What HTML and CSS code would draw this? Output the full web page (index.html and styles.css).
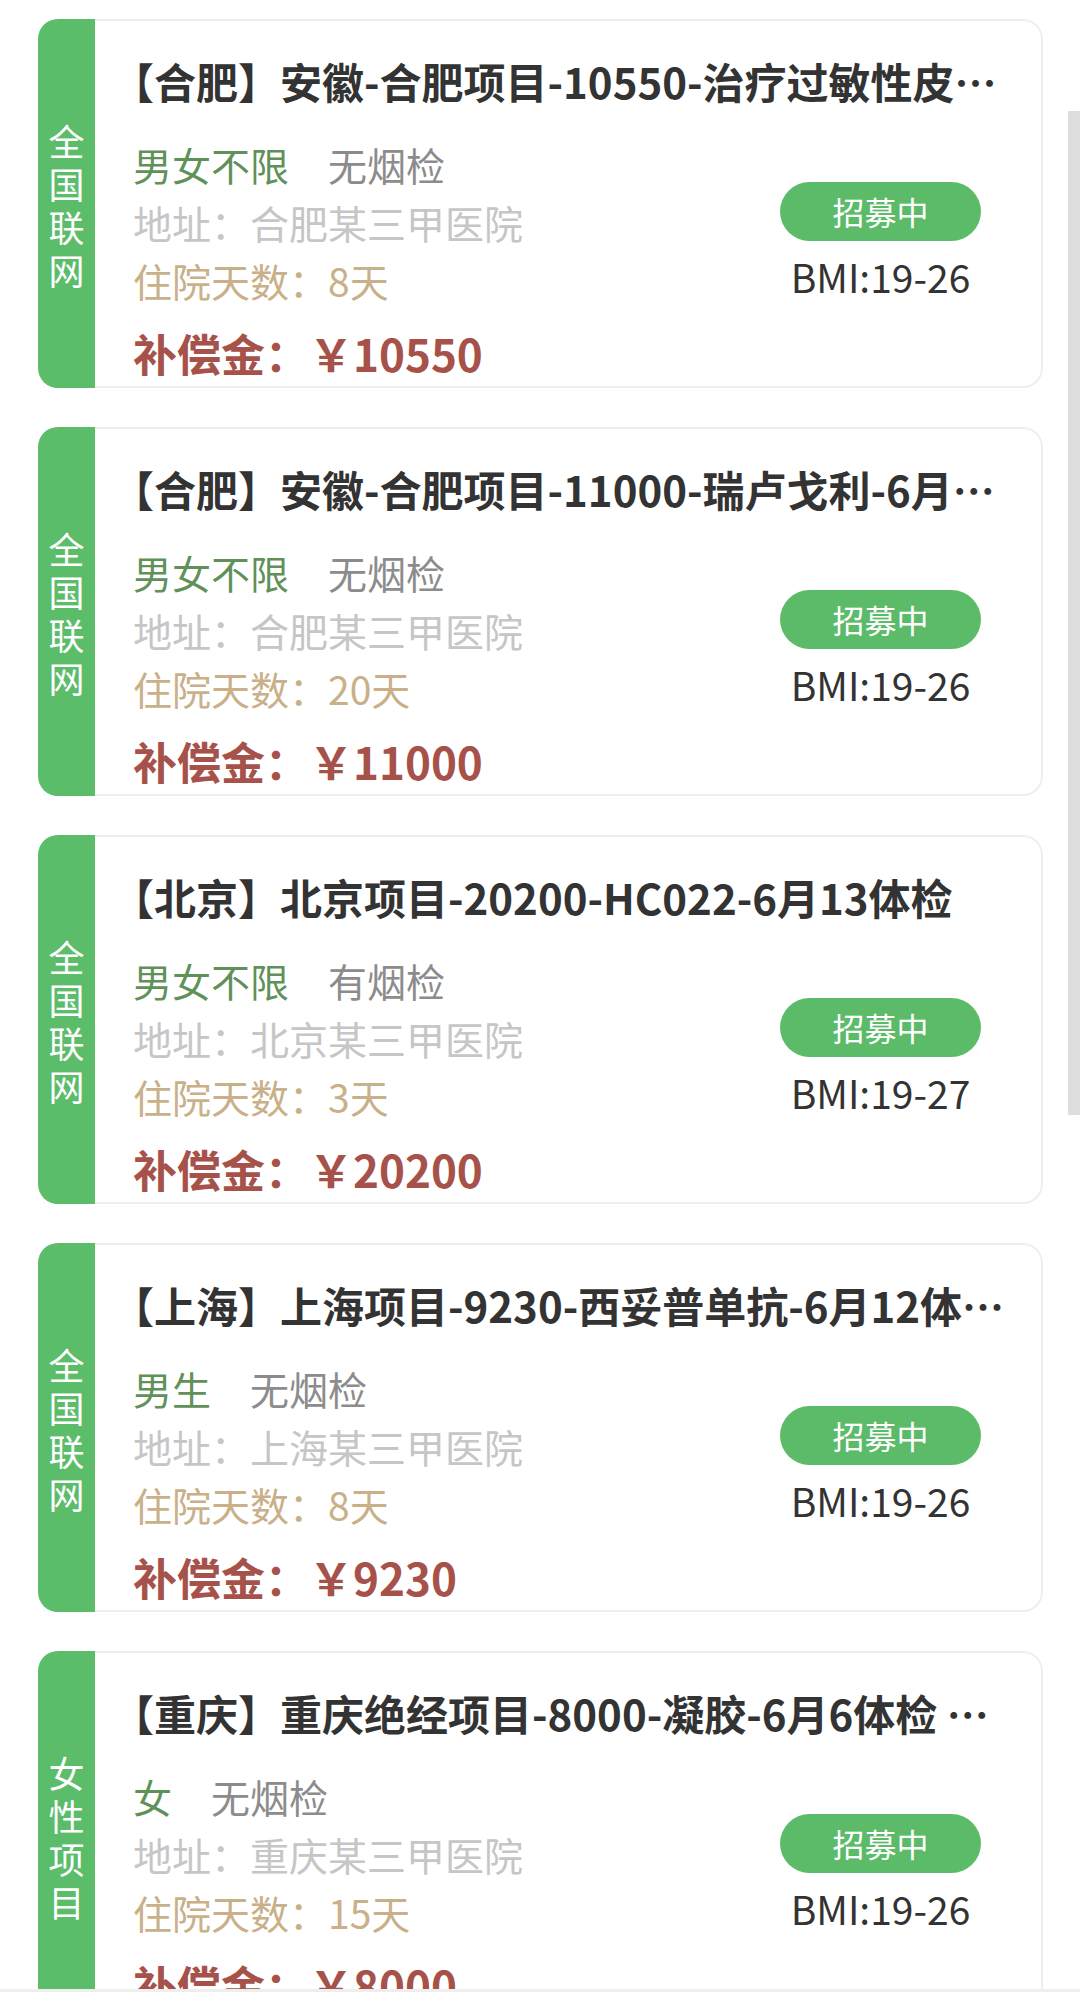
FILE: index.html
```html
<!DOCTYPE html>
<html>
<head>
  <meta charset="utf-8">
  <title>项目列表</title>
  <link rel="stylesheet" href="styles.css">
</head>
<body>
  <div class="list">

    <div class="card">
      <div class="tag">全国联网</div>
      <div class="info">
        <div class="title">【合肥】安徽-合肥项目-10550-治疗过敏性皮…</div>
        <div class="detail">
          <div class="left">
            <div class="row"><span class="sex">男女不限</span><span class="smoke">无烟检</span></div>
            <div class="row addr">地址：合肥某三甲医院</div>
            <div class="row days">住院天数：8天</div>
            <div class="money">补偿金：￥10550</div>
          </div>
          <div class="right">
            <div class="status">招募中</div>
            <div class="bmi">BMI:19-26</div>
          </div>
        </div>
      </div>
    </div>

    <div class="card">
      <div class="tag">全国联网</div>
      <div class="info">
        <div class="title">【合肥】安徽-合肥项目-11000-瑞卢戈利-6月…</div>
        <div class="detail">
          <div class="left">
            <div class="row"><span class="sex">男女不限</span><span class="smoke">无烟检</span></div>
            <div class="row addr">地址：合肥某三甲医院</div>
            <div class="row days">住院天数：20天</div>
            <div class="money">补偿金：￥11000</div>
          </div>
          <div class="right">
            <div class="status">招募中</div>
            <div class="bmi">BMI:19-26</div>
          </div>
        </div>
      </div>
    </div>

    <div class="card">
      <div class="tag">全国联网</div>
      <div class="info">
        <div class="title">【北京】北京项目-20200-HC022-6月13体检</div>
        <div class="detail">
          <div class="left">
            <div class="row"><span class="sex">男女不限</span><span class="smoke">有烟检</span></div>
            <div class="row addr">地址：北京某三甲医院</div>
            <div class="row days">住院天数：3天</div>
            <div class="money">补偿金：￥20200</div>
          </div>
          <div class="right">
            <div class="status">招募中</div>
            <div class="bmi">BMI:19-27</div>
          </div>
        </div>
      </div>
    </div>

    <div class="card">
      <div class="tag">全国联网</div>
      <div class="info">
        <div class="title">【上海】上海项目-9230-西妥普单抗-6月12体…</div>
        <div class="detail">
          <div class="left">
            <div class="row"><span class="sex">男生</span><span class="smoke">无烟检</span></div>
            <div class="row addr">地址：上海某三甲医院</div>
            <div class="row days">住院天数：8天</div>
            <div class="money">补偿金：￥9230</div>
          </div>
          <div class="right">
            <div class="status">招募中</div>
            <div class="bmi">BMI:19-26</div>
          </div>
        </div>
      </div>
    </div>

    <div class="card">
      <div class="tag">女性项目</div>
      <div class="info">
        <div class="title">【重庆】重庆绝经项目-8000-凝胶-6月6体检 …</div>
        <div class="detail">
          <div class="left">
            <div class="row"><span class="sex">女</span><span class="smoke">无烟检</span></div>
            <div class="row addr">地址：重庆某三甲医院</div>
            <div class="row days">住院天数：15天</div>
            <div class="money">补偿金：￥8000</div>
          </div>
          <div class="right">
            <div class="status">招募中</div>
            <div class="bmi">BMI:19-26</div>
          </div>
        </div>
      </div>
    </div>

  </div>

  <div class="scrollbar"></div>
  <div class="tabbar"></div>
</body>
</html>
```

FILE: styles.css
```css
html, body {
  margin: 0;
  padding: 0;
  overflow: hidden;
  background: #fff;
}

body {
  font-family: "Noto Sans CJK SC", "Noto Sans", sans-serif;
  color: #333;
}

.list {
  padding: 19px 37px 0 38px;
}

.card {
  display: flex;
  height: 369px;
  margin-bottom: 39px;
  box-sizing: border-box;
}

.tag {
  width: 57px;
  flex-shrink: 0;
  padding-top: 12px;
  box-sizing: border-box;
  background: #5bbc6a;
  color: #fff;
  border-radius: 20px 0 0 20px;
  display: flex;
  align-items: center;
  justify-content: center;
  writing-mode: vertical-rl;
  font-size: 36px;
  letter-spacing: 7px;
}

.info {
  flex: 1;
  min-width: 0;
  border: 2px solid #eeeeee;
  border-left: none;
  border-radius: 0 20px 20px 0;
  padding: 28px 30px 0 38px;
}

.title {
  font-size: 42px;
  font-weight: bold;
  line-height: 63px;
  white-space: nowrap;
  overflow: hidden;
  text-spacing-trim: trim-start;
}

.detail {
  display: flex;
  justify-content: space-between;
  margin-top: 23px;
}

.row {
  font-size: 39px;
  line-height: 58px;
}

.sex {
  color: #5f9159;
  margin-right: 39px;
}

.smoke {
  color: #8c8c8c;
}

.addr {
  color: #c6c6c6;
}

.days {
  color: #c9b089;
}

.money {
  margin-top: 14px;
  font-size: 44px;
  font-weight: bold;
  line-height: 60px;
  color: #a6524a;
}

.right {
  width: 201px;
  margin-top: 47px;
  margin-right: 30px;
  text-align: center;
}

.status {
  height: 59px;
  line-height: 59px;
  border-radius: 30px;
  background: #5bbb69;
  color: #fff;
  font-size: 32px;
}

.bmi {
  margin-top: 10px;
  font-size: 39px;
  line-height: 50px;
  color: #333;
}

.scrollbar {
  position: fixed;
  top: 111px;
  right: 0;
  width: 12px;
  height: 1004px;
  background: #dddcde;
}

.tabbar {
  position: fixed;
  left: 0;
  right: 0;
  bottom: 0;
  height: 3px;
  background: #eeeeee;
}
```
